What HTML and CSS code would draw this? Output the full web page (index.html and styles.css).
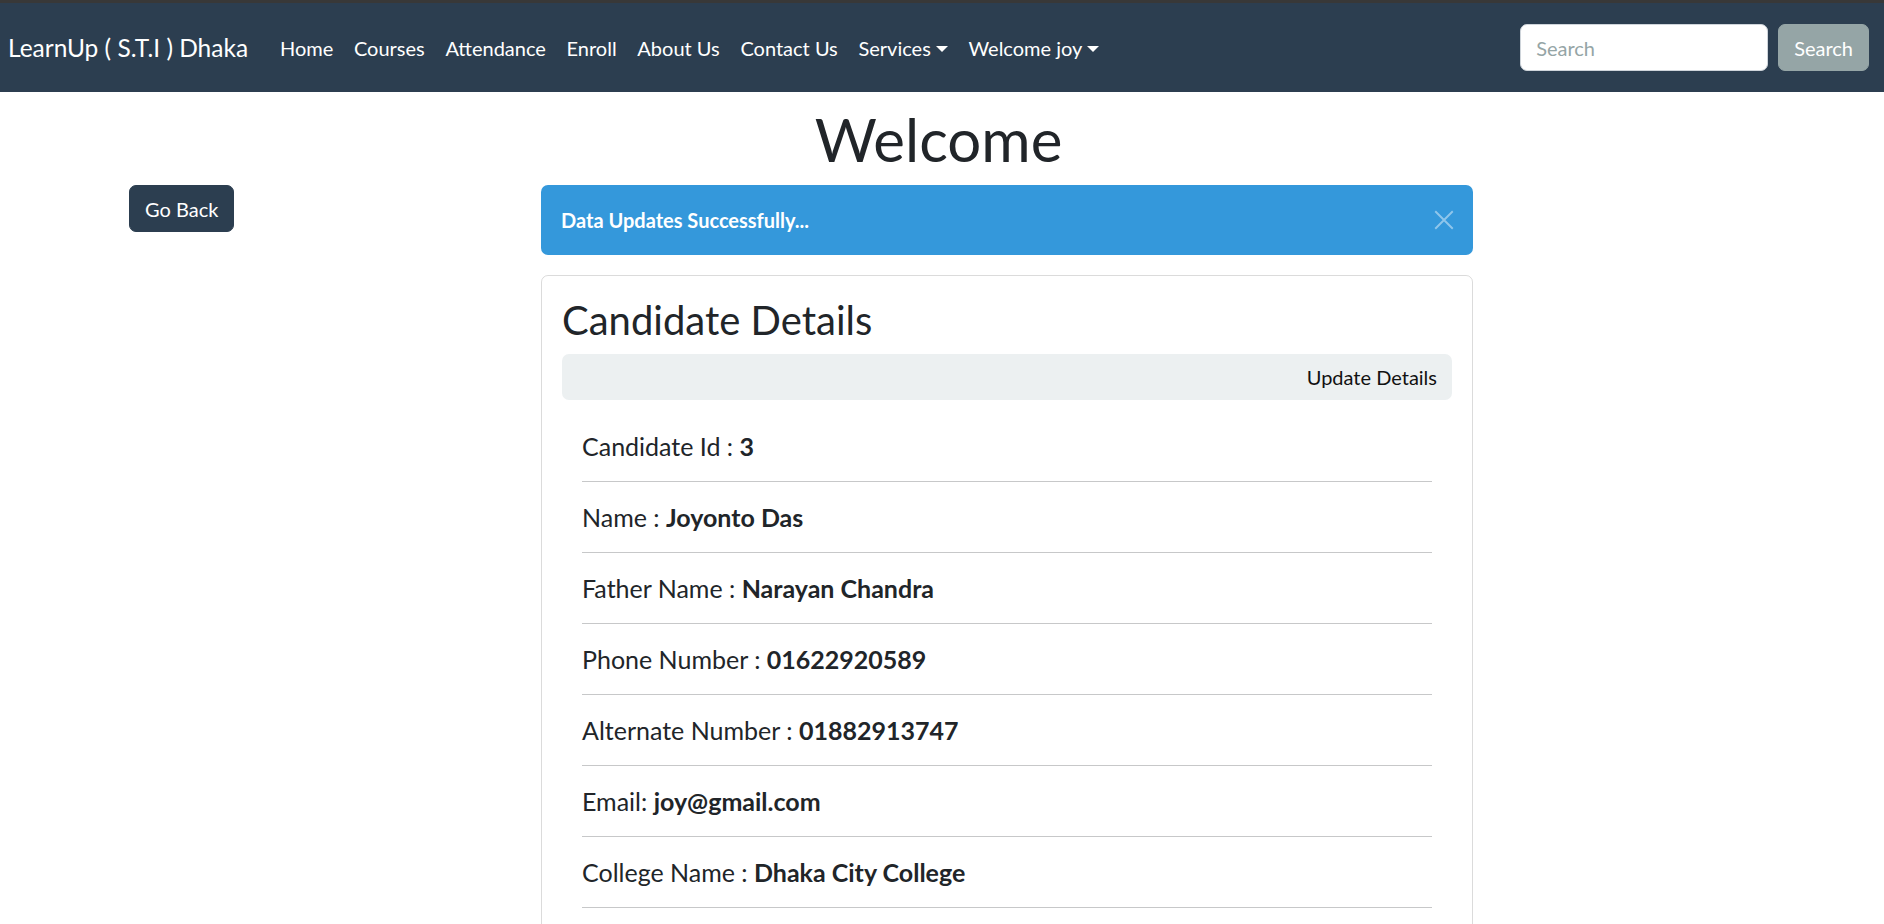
FILE: index.html
```html
<!DOCTYPE html>
<html lang="en">
<head>
<meta charset="utf-8">
<title>LearnUp</title>
<link rel="stylesheet" href="styles.css">
</head>
<body>
<div class="topstrip"></div>
<nav class="navbar">
  <a class="brand" href="#">LearnUp ( S.T.I ) Dhaka</a>
  <ul class="nav">
    <li><a class="nav-link" href="#">Home</a></li>
    <li><a class="nav-link" href="#">Courses</a></li>
    <li><a class="nav-link" href="#">Attendance</a></li>
    <li><a class="nav-link" href="#">Enroll</a></li>
    <li><a class="nav-link" href="#">About Us</a></li>
    <li><a class="nav-link" href="#">Contact Us</a></li>
    <li><a class="nav-link dropdown" href="#">Services</a></li>
    <li><a class="nav-link dropdown" href="#">Welcome joy</a></li>
  </ul>
  <form class="search">
    <input class="search-input" type="search" placeholder="Search">
    <button class="btn btn-secondary" type="button">Search</button>
  </form>
</nav>

<div class="content">
  <h1 class="page-title">Welcome</h1>

  <div class="main">
    <div class="col-left">
      <button class="btn btn-primary" type="button">Go Back</button>
    </div>
    <div class="col-mid">
      <div class="alert">
        <strong>Data Updates Successfully...</strong>
        <button class="btn-close" type="button" aria-label="Close">
          <svg viewBox="0 0 16 16" width="20" height="20"><path d="M1 1 L15 15 M15 1 L1 15" stroke="#fff" stroke-width="1.5" fill="none"/></svg>
        </button>
      </div>
      <div class="card">
        <h3 class="card-title">Candidate Details</h3>
        <div class="toolbar"><a class="toolbar-link" href="#">Update Details</a></div>
        <div class="details">
          <div class="detail">Candidate Id : <b>3</b></div>
          <hr>
          <div class="detail">Name : <b>Joyonto Das</b></div>
          <hr>
          <div class="detail">Father Name : <b>Narayan Chandra</b></div>
          <hr>
          <div class="detail">Phone Number : <b>01622920589</b></div>
          <hr>
          <div class="detail">Alternate Number : <b>01882913747</b></div>
          <hr>
          <div class="detail">Email: <b>joy@gmail.com</b></div>
          <hr>
          <div class="detail">College Name : <b>Dhaka City College</b></div>
          <hr>
        </div>
      </div>
    </div>
  </div>
</div>
</body>
</html>
```

FILE: styles.css
```css
* { box-sizing: border-box; }
html, body { margin: 0; padding: 0; }
body {
  font-family: Lato, "Open Sans", sans-serif;
  font-size: 20px;
  line-height: 1.5;
  color: #212529;
  background: #fff;
}
a { text-decoration: none; color: inherit; }

.topstrip { height: 3px; background: #383838; }

.navbar {
  display: flex;
  align-items: center;
  height: 89px;
  padding: 0 15px 0 8px;
  background: #2c3e50;
}
.brand {
  font-size: 24.5px;
  line-height: 37.5px;
  padding: 6px 0;
  margin-right: 21.5px;
  color: #fff;
}
.nav {
  display: flex;
  list-style: none;
  margin: 0 auto 0 0;
  padding: 0;
}
.nav-link {
  display: block;
  padding: 8px 10.35px;
  color: #fff;
  font-size: 20px;
}
.dropdown::after {
  content: "";
  display: inline-block;
  margin-left: 5px;
  vertical-align: 4px;
  border-top: 6px solid #fff;
  border-left: 6px solid transparent;
  border-right: 6px solid transparent;
}
.search { display: flex; align-items: center; gap: 10px; margin: 0; }
.search-input {
  width: 248px;
  height: 47px;
  padding: 7px 15px;
  border: 1px solid #ced4da;
  border-radius: 7px;
  font-family: inherit;
  font-size: 20px;
  color: #212529;
  background: #fff;
  outline: none;
}
.search-input::placeholder { color: #95a5a6; }

.btn {
  display: inline-block;
  height: 47px;
  padding: 7px 15px;
  border: 1px solid transparent;
  border-radius: 7px;
  font-family: inherit;
  font-size: 20px;
  line-height: 30px;
  color: #fff;
  cursor: pointer;
}
.btn-secondary { background: #95a5a6; border-color: #95a5a6; }
.btn-primary { background: #2c3e50; border-color: #2c3e50; }

.content { padding-right: 7px; }

.page-title {
  margin: 11px 0 10px;
  font-size: 60px;
  line-height: 1.2;
  font-weight: 400;
  text-align: center;
}

.main {
  display: flex;
  padding-left: 114px;
}
.col-left { width: 412px; padding: 0 15px; }
.col-mid { width: 962px; padding: 0 15px; }

.alert {
  position: relative;
  padding: 20px 60px 20px 20px;
  margin-bottom: 20px;
  background: #3498db;
  color: #fff;
  border-radius: 7px;
}
.alert strong { font-weight: 700; }
.btn-close {
  position: absolute;
  top: 0;
  right: 0;
  padding: 25px 19px 25px 20px;
  border: 0;
  background: transparent;
  opacity: 0.45;
  line-height: 0;
  cursor: pointer;
}
.btn-close svg { display: block; }

.card {
  border: 1px solid rgba(0,0,0,0.14);
  border-radius: 7px;
  padding: 20px;
}
.card-title {
  margin: 0 0 10px;
  font-size: 40px;
  line-height: 1.2;
  font-weight: 400;
}
.toolbar {
  display: flex;
  justify-content: flex-end;
  align-items: center;
  height: 46px;
  padding: 0 15px;
  margin-bottom: 10px;
  background: #ecf0f1;
  border-radius: 7px;
}
.toolbar-link { color: #111; font-size: 20px; }

.details { padding: 21px 20px 0; }
.detail {
  font-size: 25px;
  line-height: 1.2;
}
.detail b { font-weight: 700; }
.details hr {
  margin: 20px 0;
  border: 0;
  border-top: 1px solid rgba(33,37,41,0.25);
  height: 0;
}
```
